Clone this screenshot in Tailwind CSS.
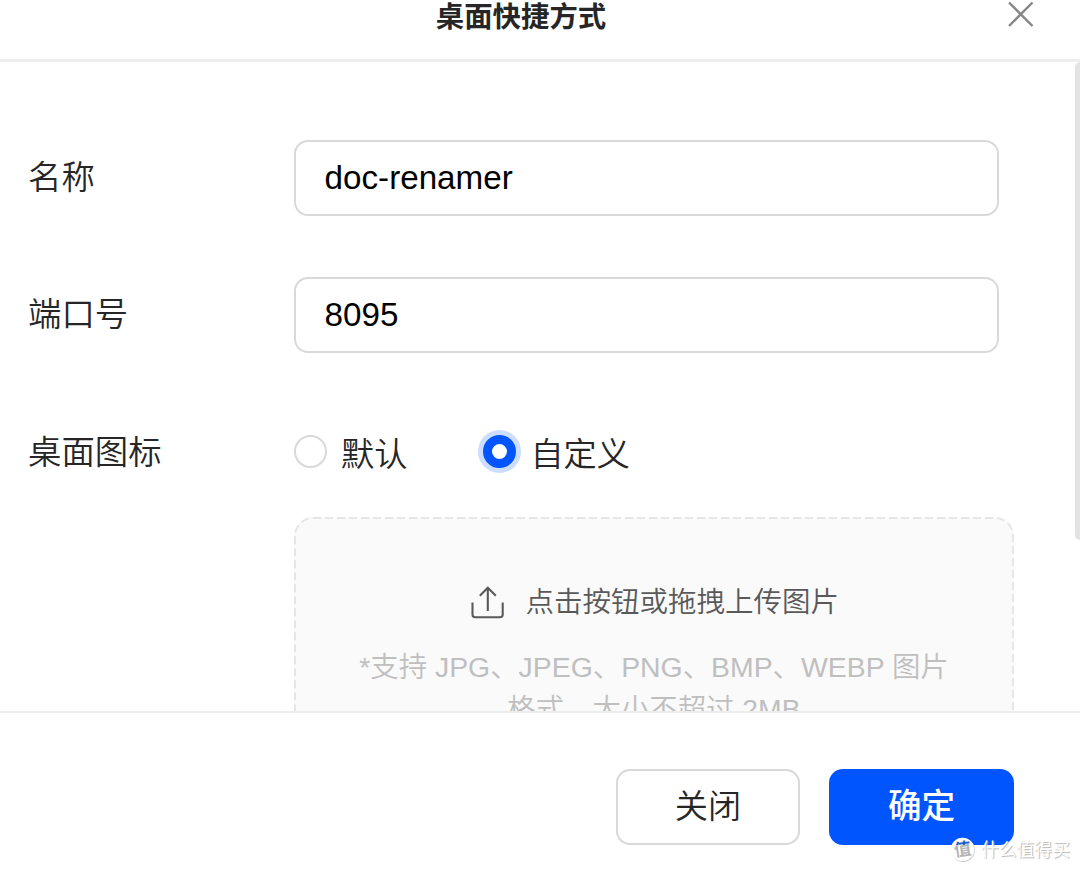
<!DOCTYPE html>
<html lang="zh-CN">
<head>
  <meta charset="UTF-8">
  <meta name="viewport" content="width=device-width, initial-scale=1.0">
  <title>桌面快捷方式</title>
  <script src="https://cdn.jsdelivr.net/npm/@tailwindcss/browser@4"></script>
</head>
<body class="bg-white overflow-hidden font-['Liberation_Sans','Noto_Sans_CJK_SC',sans-serif]">
  <div class="relative flex flex-col w-[1080px] h-[872px] overflow-hidden text-[#262626]">
    <!-- header -->
    <header class="relative h-[62px] shrink-0 border-b-[3px] border-[#eeeeee] text-center">
      <h1 class="pr-[38px] text-[28.4px] leading-[35px] font-bold">桌面快捷方式</h1>
      <button class="absolute left-[1008px] top-[1px]" aria-label="关闭">
        <svg class="size-[26px]" viewBox="0 0 26 26" fill="none" stroke="#868686" stroke-width="2.4">
          <path d="M1 1.5 L24.5 25 M24.5 1.5 L1 25"/>
        </svg>
      </button>
    </header>

    <!-- form -->
    <main class="relative h-[649px] shrink-0 overflow-hidden pl-[28px] pt-[78px] text-[33.2px]">
      <div class="flex items-center h-[75px]">
        <label class="w-[266px] pt-[1px] leading-[50px] font-[350] text-[33.4px]">名称</label>
        <input type="text" value="doc-renamer" class="w-[705px] h-[76px] rounded-[14px] border-2 border-[#d9d9d9] pl-[28.6px] text-black outline-none">
      </div>
      <div class="flex items-center h-[75px] mt-[62px]">
        <label class="w-[266px] pt-[1px] leading-[50px] font-[350] text-[33.4px]">端口号</label>
        <input type="text" value="8095" class="w-[705px] h-[76px] rounded-[14px] border-2 border-[#d9d9d9] pl-[28.6px] text-black outline-none">
      </div>
      <div class="flex items-center h-[75px] mt-[62px] font-[350]">
        <span class="w-[266px] pt-[3px] leading-[50px] text-[33.4px]">桌面图标</span>
        <span class="size-[33px] rounded-full border-2 border-[#d9d9d9]"></span>
        <span class="ml-[14px] mt-[7px] leading-[50px]">默认</span>
        <span class="ml-[76px] size-[33px] rounded-full border-[9.5px] border-[#0055ff] bg-white ring-[5px] ring-[#ccddff]"></span>
        <span class="ml-[14px] mt-[7px] leading-[50px]">自定义</span>
      </div>

      <div class="relative ml-[266px] mt-[28px] w-[720px] h-[260px] rounded-[19px] bg-[#fafafa] text-[28.4px] font-[350]">
        <svg class="absolute inset-0 size-full" fill="none">
          <rect x="1" y="1" width="718" height="258" rx="18" stroke="#e6e6e6" stroke-width="2" stroke-dasharray="8 4"/>
        </svg>
        <div class="flex items-center pt-[64px] pl-[177px] text-[#595959]">
          <svg class="w-[34px] h-[34px]" viewBox="0 0 34 34" fill="none" stroke="#595959" stroke-width="2.1">
            <path d="M1.5 16.5 V28.5 Q1.5 31.2 4.2 31.2 H29 Q31.7 31.2 31.7 28.5 V16.5"/>
            <path d="M16.8 25 V2 M8.8 9.8 L16.8 1.8 L24.8 9.8"/>
          </svg>
          <span class="ml-[20.5px] pb-px leading-[42px] text-[28.5px] whitespace-nowrap">点击按钮或拖拽上传图片</span>
        </div>
        <p class="mt-[23px] text-center leading-[41.5px] text-[#bfbfbf]">*支持 JPG、JPEG、PNG、BMP、WEBP 图片<br>格式，大小不超过 2MB</p>
      </div>
      <!-- scrollbar -->
      <div class="absolute left-[1075px] top-0 w-[10px] h-[478px] rounded-[5px] bg-[#e3e3e3]"></div>
    </main>

    <!-- footer -->
    <footer class="flex grow justify-end items-start border-t-2 border-[#ececec] pt-[56px] pr-[66px] gap-[29px] text-[33.2px]">
      <button class="w-[184px] h-[76px] rounded-[14px] border-2 border-[#d9d9d9] pb-px font-[350]">关闭</button>
      <button class="w-[185px] h-[76px] rounded-[14px] bg-[#0055ff] pt-px text-[33.6px] font-medium text-white">确定</button>
    </footer>

    <!-- watermark -->
    <div class="absolute left-[950px] top-[837px] flex items-center h-[25px] text-white">
      <svg class="size-[26px]" viewBox="0 0 26 26">
        <circle cx="13.1" cy="13.1" r="11.8" fill="#c4c4c4"/>
        <circle cx="12.5" cy="12.5" r="11.8" fill="#ffffff"/>
        <text x="12.5" y="18.5" text-anchor="middle" font-size="17" font-weight="700" fill="#b5b5b5" transform="rotate(-8 12.5 12.5)">值</text>
        <clipPath id="onButton"><rect width="26" height="8"/></clipPath>
        <g clip-path="url(#onButton)">
          <text x="12.5" y="18.5" text-anchor="middle" font-size="17" font-weight="700" fill="#1d5fd6" transform="rotate(-8 12.5 12.5)">值</text>
        </g>
      </svg>
      <span class="ml-[5px] pt-[2px] text-[17.8px] leading-[25px] whitespace-nowrap [text-shadow:1px_1px_1px_#b4b4b4]">什么值得买</span>
    </div>
  </div>
</body>
</html>
